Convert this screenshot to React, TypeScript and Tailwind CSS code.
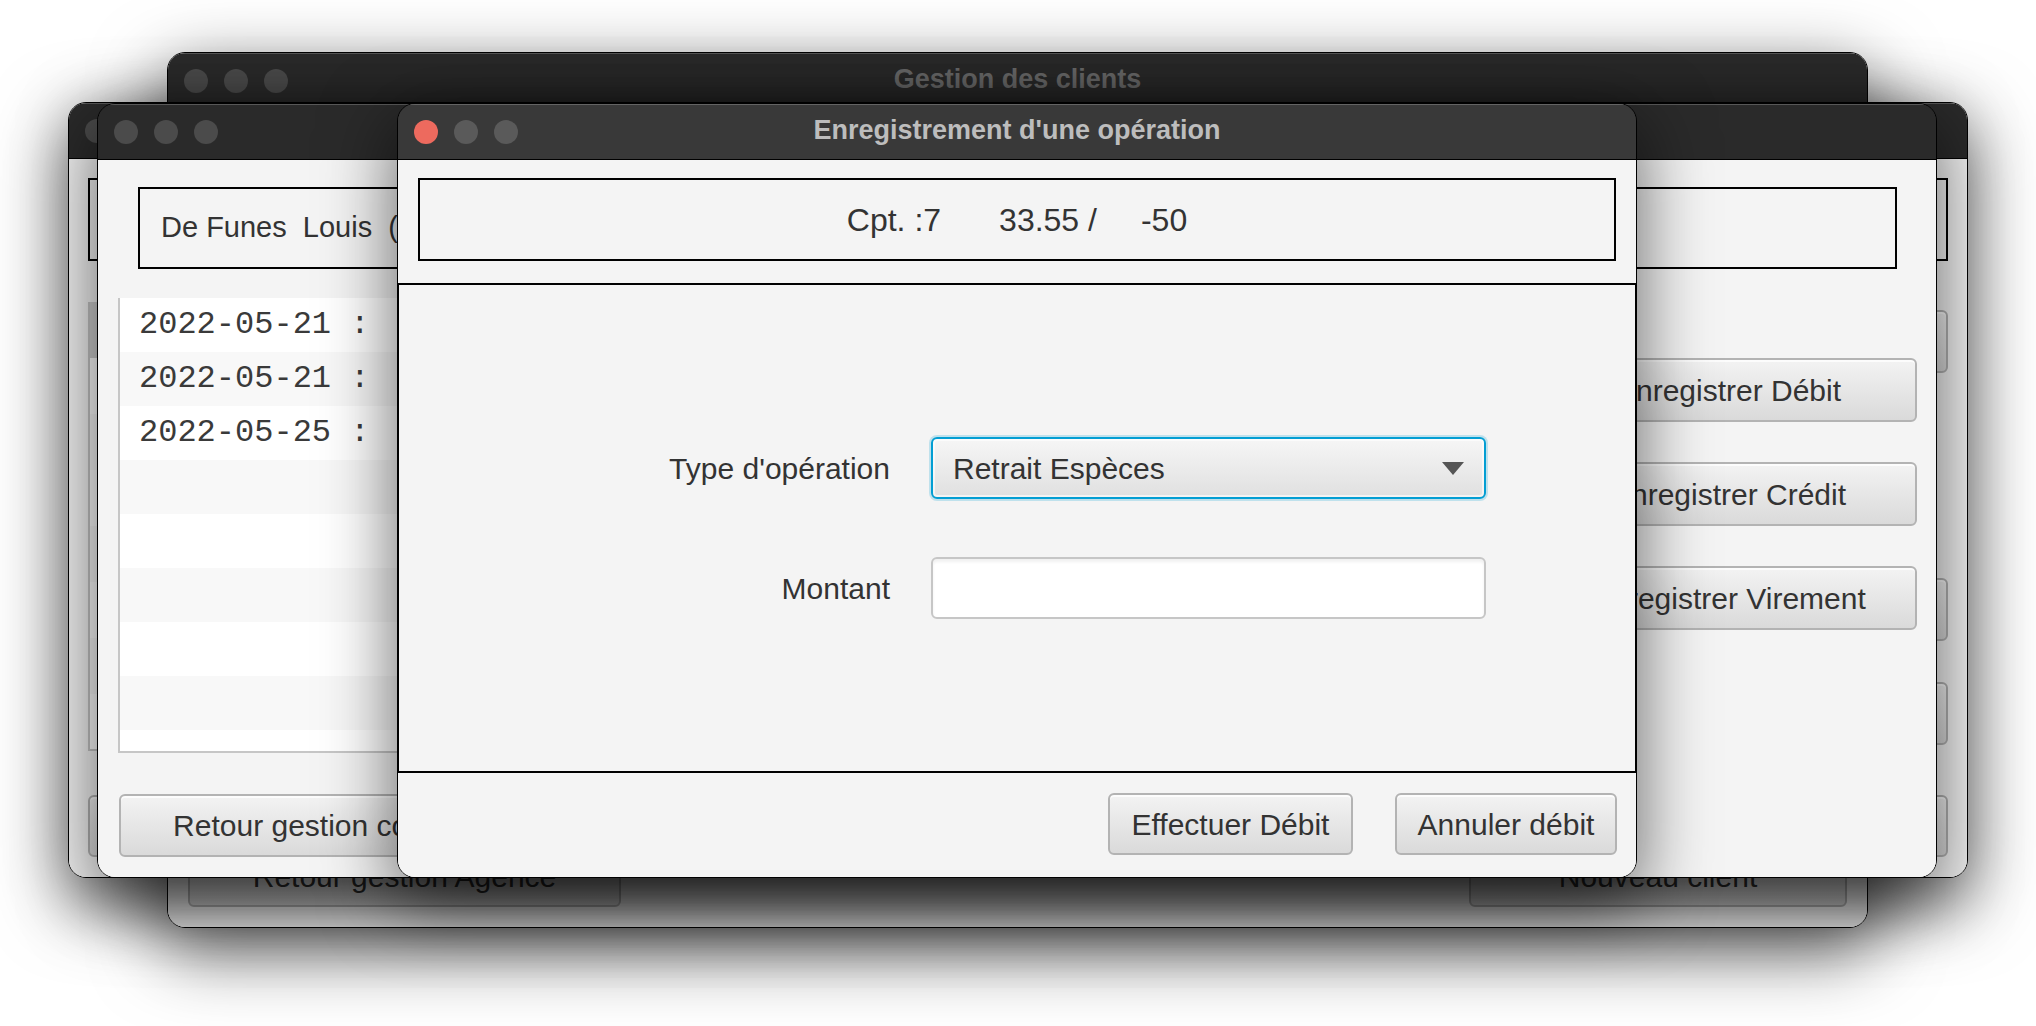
import React from 'react';

type WinProps = {
  pos: string;
  title?: string;
  dialog?: boolean;
  children?: React.ReactNode;
};

const Lights = ({ dialog }: { dialog: boolean }) => (
  <div className="flex items-center gap-[16px] pl-[16px]">
    <span className={`h-[24px] w-[24px] rounded-full ${dialog ? 'bg-[#ed6a5e]' : 'bg-[#4b4b4b]'}`} />
    <span className={`h-[24px] w-[24px] rounded-full ${dialog ? 'bg-[#5a5a5a]' : 'bg-[#4b4b4b]'}`} />
    <span className={`h-[24px] w-[24px] rounded-full ${dialog ? 'bg-[#5a5a5a]' : 'bg-[#4b4b4b]'}`} />
  </div>
);

const Window = ({ pos, title, dialog = false, children }: WinProps) => (
  <div
    className={`absolute flex flex-col overflow-hidden rounded-[18px] border border-black shadow-[0_22px_70px_4px_rgba(0,0,0,0.56)] ${pos}`}
  >
    <div
      className={`relative flex h-[56px] shrink-0 items-center border-b border-black shadow-[inset_0_1px_0_rgba(255,255,255,0.22)] ${
        dialog ? 'bg-[#393939]' : 'bg-[#2a2a2a]'
      }`}
    >
      <Lights dialog={dialog} />
      {title && (
        <div
          className={`absolute inset-0 flex items-center justify-center pb-[2px] text-[27px] font-bold ${
            dialog ? 'text-[#bdbdbd]' : 'text-[#6c6c6c]'
          }`}
        >
          {title}
        </div>
      )}
    </div>
    <div className="flex min-h-0 flex-1 flex-col bg-[#f4f4f4]">{children}</div>
  </div>
);

const Button = ({ label, size }: { label: string; size: string }) => (
  <div
    className={`flex shrink-0 items-center justify-center whitespace-nowrap rounded-[6px] border-2 border-[#b3b3b3] bg-linear-to-b from-[#f3f3f3] to-[#dadada] text-[30px] text-[#333] shadow-[inset_0_2px_0_rgba(255,255,255,0.75)] ${size}`}
  >
    {label}
  </div>
);

const operations = [
  '2022-05-21 :  Dépôt Espèces        +100.00',
  '2022-05-21 :  Retrait Espèces       -50.00',
  '2022-05-25 :  Virement Compte       -16.45',
  '',
  '',
  '',
  '',
  '',
  '',
];

export default function App() {
  return (
    <div className="relative h-[1026px] w-[2036px] overflow-hidden bg-white font-['Liberation_Sans',Arial,sans-serif]">
      {/* Gestion des clients (back) */}
      <Window pos="left-[167px] top-[52px] h-[876px] w-[1701px]" title="Gestion des clients">
        <div className="mt-auto flex justify-between px-[20px] pb-[20px]">
          <Button label="Retour gestion Agence" size="h-[62px] w-[433px]" />
          <Button label="Nouveau client" size="h-[62px] w-[378px]" />
        </div>
      </Window>

      {/* Comptes of another client */}
      <Window pos="left-[68px] top-[102px] h-[776px] w-[1900px]">
        <div className="px-[19px] pt-[19px]">
          <div className="h-[83px] border-2 border-black" />
        </div>
        <div className="mt-[41px] flex px-[19px]">
          <div className="flex h-[449px] w-[1380px] flex-col border-x-2 border-b-2 border-[#c6c6c6] bg-white">
            <div className="h-[56px] shrink-0 bg-[#cfcfcf]" />
            <div className="h-[56px] shrink-0 bg-white" />
            <div className="h-[56px] shrink-0 bg-[#f8f8f8]" />
            <div className="h-[56px] shrink-0 bg-white" />
            <div className="h-[56px] shrink-0 bg-[#f8f8f8]" />
            <div className="h-[56px] shrink-0 bg-white" />
            <div className="h-[56px] shrink-0 bg-[#f8f8f8]" />
          </div>
          <div className="ml-auto flex w-[380px] flex-col pt-[8px]">
            <Button label="" size="h-[63px] w-full" />
            <Button label="" size="mt-[205px] h-[63px] w-full" />
            <Button label="" size="mt-[41px] h-[63px] w-full" />
          </div>
        </div>
        <div className="mt-[44px] flex justify-between px-[19px]">
          <Button label="" size="h-[62px] w-[425px]" />
          <Button label="" size="h-[62px] w-[380px]" />
        </div>
      </Window>

      {/* Opérations du compte */}
      <Window pos="left-[97px] top-[103px] h-[775px] w-[1840px]">
        <div className="pl-[40px] pr-[39px] pt-[27px]">
          <div className="flex h-[82px] items-center whitespace-pre border-2 border-black pl-[21px] text-[29px] text-[#333]">
            De Funes  Louis  (1)
          </div>
        </div>
        <div className="mt-[29px] flex">
          <div className="ml-[20px] flex h-[455px] w-[1380px] flex-col overflow-hidden border-x-2 border-b-2 border-[#c6c6c6] bg-white font-['Liberation_Mono',monospace] text-[32px] text-[#3a3a3a]">
            {operations.map((op, i) => (
              <div
                key={i}
                className={`flex h-[54px] shrink-0 items-center whitespace-pre pl-[19px] ${
                  i % 2 === 0 ? 'bg-white' : 'bg-[#f8f8f8]'
                }`}
              >
                {op}
              </div>
            ))}
          </div>
          <div className="ml-auto mr-[19px] flex w-[377px] flex-col gap-[40px] pt-[60px]">
            <Button label="Enregistrer Débit" size="h-[64px] w-full" />
            <Button label="Enregistrer Crédit" size="h-[64px] w-full" />
            <Button label="Enregistrer Virement" size="h-[64px] w-full" />
          </div>
        </div>
        <div className="mt-[41px] pl-[21px]">
          <Button label="Retour gestion comptes" size="h-[63px] w-[425px]" />
        </div>
      </Window>

      {/* Dialog */}
      <Window pos="left-[397px] top-[103px] h-[775px] w-[1240px]" title="Enregistrement d'une opération" dialog>
        <div className="px-[20px] pb-[22px] pt-[18px]">
          <div className="flex h-[83px] items-center justify-center whitespace-pre border-2 border-black text-[32px] text-[#333]">
            <span>Cpt. :7</span>
            <span className="ml-[58px]">33.55 /</span>
            <span className="ml-[44px]">-50</span>
          </div>
        </div>
        <div className="flex h-[490px] shrink-0 flex-col justify-center gap-[58px] border-x border-y-2 border-black text-[30px] text-[#333]">
          <div className="flex items-center">
            <div className="w-[491px] text-right">Type d'opération</div>
            <div className="ml-[41px] flex h-[62px] w-[555px] items-center justify-between rounded-[6px] border-2 border-[#039ed3] bg-linear-to-b from-[#f6f6f6] to-[#e0e0e0] pl-[20px] pr-[20px] shadow-[0_0_0_2px_rgba(3,158,211,0.22),inset_0_0_0_2px_rgba(255,255,255,0.6)]">
              <span>Retrait Espèces</span>
              <svg width="22" height="13" viewBox="0 0 22 13">
                <polygon points="0,0 22,0 11,13" fill="#555555" />
              </svg>
            </div>
          </div>
          <div className="flex items-center">
            <div className="w-[491px] text-right">Montant</div>
            <div className="ml-[41px] h-[62px] w-[555px] rounded-[6px] border-2 border-[#c6c6c6] bg-white shadow-[inset_0_3px_3px_rgba(0,0,0,0.06)]" />
          </div>
        </div>
        <div className="flex flex-1 items-start justify-end gap-[42px] pr-[19px] pt-[20px]">
          <Button label="Effectuer Débit" size="h-[62px] w-[245px]" />
          <Button label="Annuler débit" size="h-[62px] w-[222px]" />
        </div>
      </Window>
    </div>
  );
}
